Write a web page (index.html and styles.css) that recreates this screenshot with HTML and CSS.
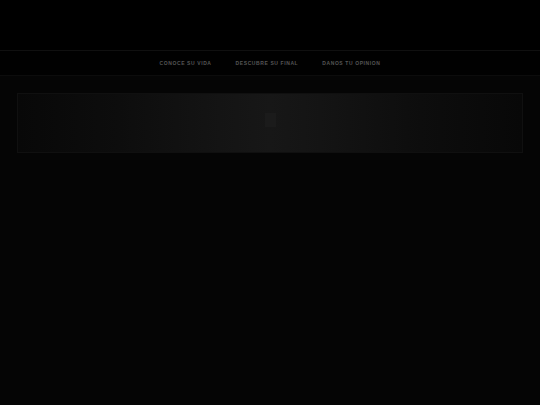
FILE: index.html
```
<!DOCTYPE html>
<html lang="es">
<head>
<meta charset="utf-8">
<title>Conoce su vida</title>
<link rel="stylesheet" href="styles.css">
</head>
<body>
<header class="top"></header>
<nav class="nav">
  <a class="nav-link" href="#">CONOCE SU VIDA</a>
  <a class="nav-link" href="#">DESCUBRE SU FINAL</a>
  <a class="nav-link" href="#">DANOS TU OPINION</a>
</nav>
<main class="main">
  <section class="banner">
    <div class="loader"></div>
  </section>
</main>
</body>
</html>
```
FILE: styles.css
```
html, body {
  margin: 0;
  padding: 0;
  height: 100%;
}
body {
  background: #050505;
  font-family: "Liberation Sans", Arial, sans-serif;
  display: flex;
  flex-direction: column;
}
.top {
  height: 50px;
  background: #000;
  border-bottom: 1px solid #101010;
  flex: none;
}
.nav {
  height: 24px;
  background: #010101;
  border-bottom: 1px solid #0c0c0c;
  display: flex;
  justify-content: center;
  align-items: center;
  gap: 24px;
  flex: none;
}
.nav-link {
  color: #555;
  font-size: 5px;
  font-weight: bold;
  letter-spacing: 0.6px;
  text-decoration: none;
  line-height: 1;
}
.main {
  flex: 1;
  padding: 17px 17px 0 17px;
}
.banner {
  height: 58px;
  border: 1px solid #101010;
  background: linear-gradient(90deg, #080808 0%, #0d0d0d 20%, #141414 40%, #171717 50%, #141414 60%, #0d0d0d 80%, #080808 100%);
  display: flex;
  justify-content: center;
  align-items: center;
}
.loader {
  width: 11px;
  height: 14px;
  background: #1b1b1b;
  margin-left: 1px;
  margin-top: -6px;
}
```
